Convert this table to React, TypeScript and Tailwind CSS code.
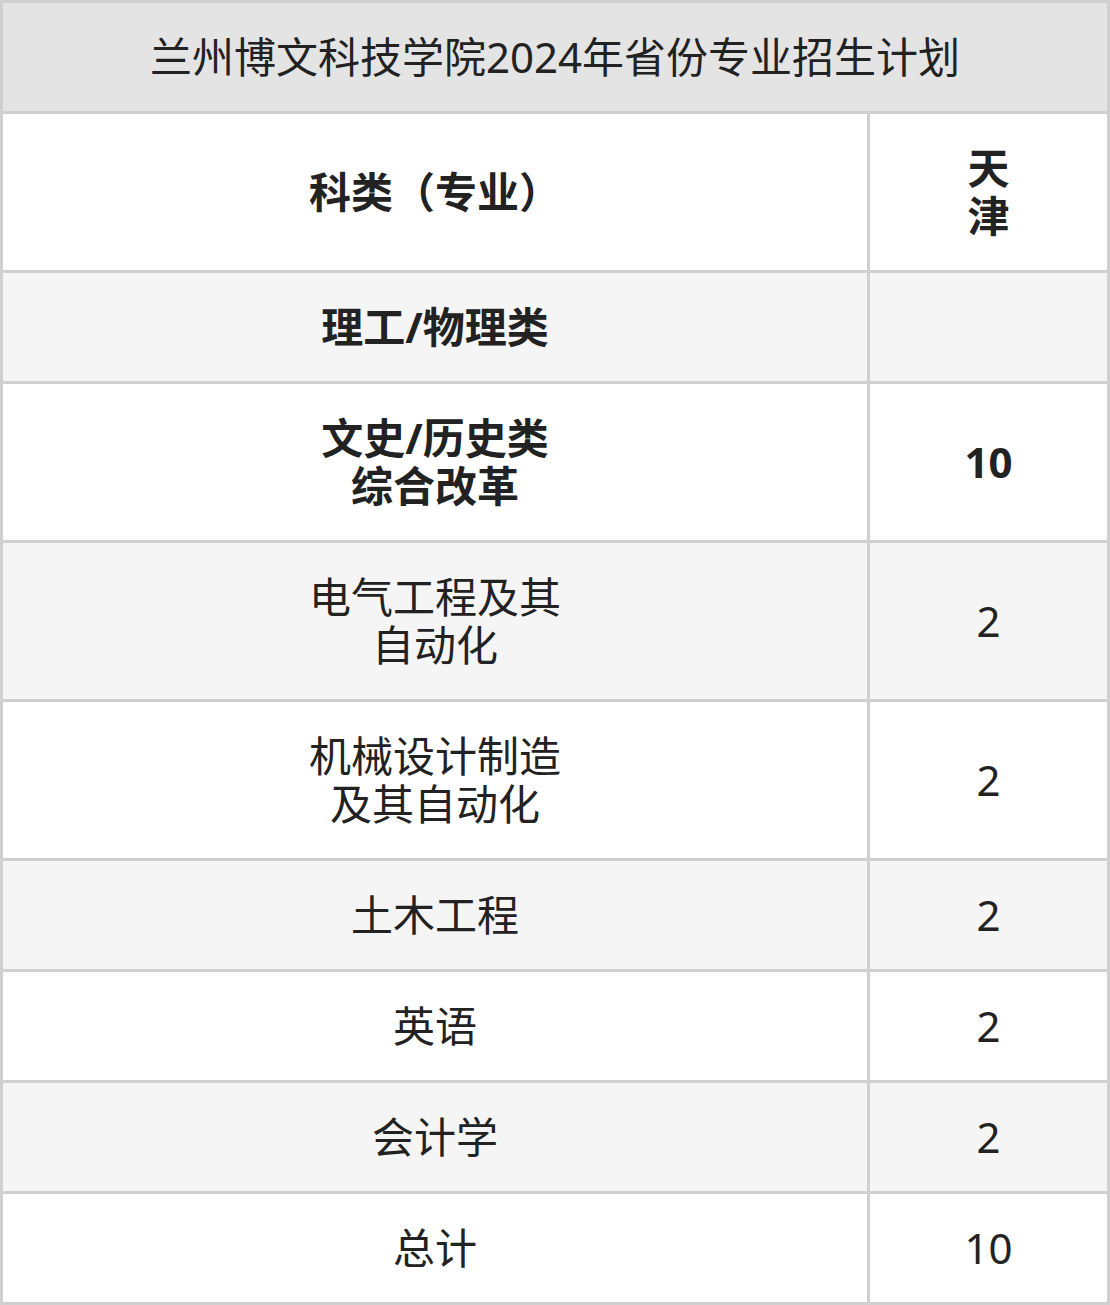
const ROWS: { name: string[]; value: string; bold?: boolean }[] = [
  { name: ['理工/物理类'], value: '', bold: true },
  { name: ['文史/历史类', '综合改革'], value: '10', bold: true },
  { name: ['电气工程及其', '自动化'], value: '2' },
  { name: ['机械设计制造', '及其自动化'], value: '2' },
  { name: ['土木工程'], value: '2' },
  { name: ['英语'], value: '2' },
  { name: ['会计学'], value: '2' },
  { name: ['总计'], value: '10' },
];

function Lines({ lines }: { lines: string[] }) {
  return (
    <>
      {lines.map((l, i) => (
        <span key={i} className="block">
          {l}
        </span>
      ))}
    </>
  );
}

export default function App() {
  return (
    <div
      className="w-[1110px] bg-white text-[#222] text-[42px] leading-[48px]"
      style={{ fontFamily: '"Noto Sans", "Noto Sans CJK SC", sans-serif' }}
    >
      <table className="w-full border-collapse border-[3px] border-[#d0d0d0] text-center">
        <tbody>
          <tr className="bg-[#e4e4e4]">
            <td colSpan={2} className="border-[3px] border-[#d0d0d0] py-[30px]">
              兰州博文科技学院2024年省份专业招生计划
            </td>
          </tr>
          <tr className="bg-white font-bold">
            <td className="border-[3px] border-[#d0d0d0] py-[30px] w-[867px]">科类（专业）</td>
            <td className="border-[3px] border-[#d0d0d0] py-[30px]">
              <Lines lines={['天', '津']} />
            </td>
          </tr>
          {ROWS.map((r, i) => (
            <tr
              key={i}
              className={`${i % 2 === 0 ? 'bg-[#f5f5f5]' : 'bg-white'} ${r.bold ? 'font-bold' : ''}`}
            >
              <td className="border-[3px] border-[#d0d0d0] py-[30px]">
                <Lines lines={r.name} />
              </td>
              <td className="border-[3px] border-[#d0d0d0] py-[30px]">{r.value}</td>
            </tr>
          ))}
        </tbody>
      </table>
    </div>
  );
}
